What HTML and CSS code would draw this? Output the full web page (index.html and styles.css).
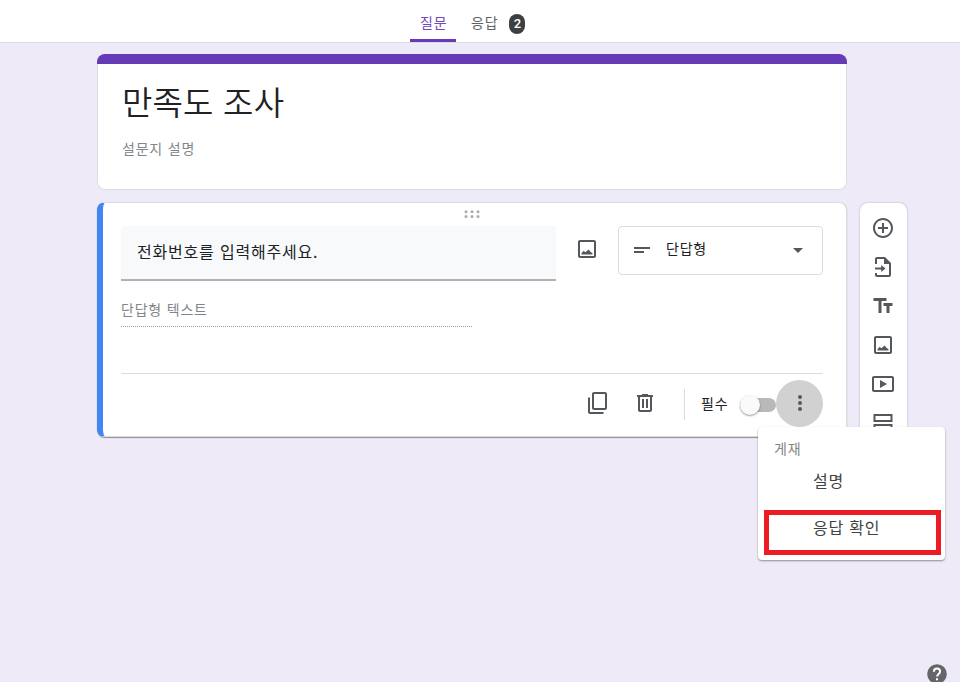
FILE: index.html
```html
<!DOCTYPE html>
<html lang="ko">
<head>
<meta charset="utf-8">
<title>만족도 조사</title>
<link rel="stylesheet" href="styles.css">
</head>
<body>
<header class="tabs">
  <div class="tab active">질문</div>
  <div class="tab">응답 <span class="count">2</span></div>
</header>
<main class="form">
  <section class="card intro">
    <h1>만족도 조사</h1>
    <p>설문지 설명</p>
  </section>
  <div class="row">
    <section class="card question">
      <svg class="grip" viewBox="0 0 16 8"><circle cx="2" cy="1.7" r="1.5"/><circle cx="8" cy="1.7" r="1.5"/><circle cx="14" cy="1.7" r="1.5"/><circle cx="2" cy="6.5" r="1.5"/><circle cx="8" cy="6.5" r="1.5"/><circle cx="14" cy="6.5" r="1.5"/></svg>
      <div class="edit">
        <div class="input">전화번호를 입력해주세요.</div>
        <svg class="icon photo" viewBox="0 0 24 24"><path d="M19 5v14H5V5h14m0-2H5c-1.100 0-2 .9-2 2v14c0 1.100.9 2 2 2h14c1.100 0 2-.9 2-2V5c0-1.100-.9-2-2-2z"/><path d="M6.500 17.500v-1.300l2.200-2.400 1.700 1.500 3.200-2.700 1.900 2.200 2 1.400v1.300z"/></svg>
        <div class="select">
          <svg class="icon" viewBox="0 0 24 24"><path d="M4 9h16v2H4zM4 13h10v2H4z"/></svg>
          <span>단답형</span>
          <svg class="icon" viewBox="0 0 24 24"><path d="M7 10l5 5 5-5z"/></svg>
        </div>
      </div>
      <div class="answer">단답형 텍스트</div>
      <div class="actions">
        <svg class="icon copy" viewBox="0 0 24 24"><path d="M19 1H8c-1.100 0-2 .9-2 2v14c0 1.100.9 2 2 2h11c1.100 0 2-.9 2-2V3c0-1.100-.9-2-2-2zm0 16H8V3h11v14zM4 6.500H2V21c0 1.100.9 2 2 2h13.500v-2H4z"/></svg>
        <svg class="icon trash" viewBox="0 0 24 24"><path d="M15 4V3H9v1H4v2h1v13c0 1.100.9 2 2 2h10c1.100 0 2-.9 2-2V6h1V4h-5zm2 15H7V6h10v13zM9 8h2v9H9zM13 8h2v9h-2z"/></svg>
        <div class="required">필수</div>
        <div class="switch"><i></i></div>
        <div class="more">
          <svg class="icon" viewBox="0 0 24 24"><circle cx="12" cy="6" r="2"/><circle cx="12" cy="12" r="2"/><circle cx="12" cy="18" r="2"/></svg>
        </div>
      </div>
    </section>
    <aside class="tools">
      <svg class="icon" viewBox="0 0 24 24"><path d="M13 7h-2v4H7v2h4v4h2v-4h4v-2h-4V7zm-1-5C6.480 2 2 6.480 2 12s4.480 10 10 10 10-4.480 10-10S17.520 2 12 2zm0 18c-4.410 0-8-3.590-8-8s3.590-8 8-8 8 3.590 8 8-3.590 8-8 8z"/></svg>
      <svg class="icon" viewBox="0 0 24 24"><path d="M14 2H6c-1.100 0-2 .9-2 2v5h2V4h7v5h5v11H6v-2H4v2c0 1.100.9 2 2 2h12c1.100 0 2-.9 2-2V8z"/><path d="M4 12.500h6.200V10l4.300 3.500-4.300 3.500v-2.500H4z"/></svg>
      <svg class="icon" viewBox="0 0 24 24"><path d="M2.500 4v3h5v12h3V7h5V4h-13zm19 5h-9v3h3v7h3v-7h3V9z"/></svg>
      <svg class="icon" viewBox="0 0 24 24"><path d="M19 5v14H5V5h14m0-2H5c-1.100 0-2 .9-2 2v14c0 1.100.9 2 2 2h14c1.100 0 2-.9 2-2V5c0-1.100-.9-2-2-2z"/><path d="M6.500 17.500v-1.300l2.200-2.400 1.700 1.500 3.200-2.700 1.900 2.200 2 1.400v1.300z"/></svg>
      <svg class="icon" viewBox="0 0 24 24"><path d="M9 8v8l7-4zM21 4H3c-1.100 0-2 .9-2 2v12c0 1.100.9 2 2 2h18c1.100 0 2-.9 2-2V6c0-1.100-.9-2-2-2zm0 14H3V6h18v12z"/></svg>
      <svg class="icon" viewBox="0 0 24 24"><path d="M2.500 3v8h19V3h-19zm17 6h-15V5h15v4zM2.500 13v8h19v-8h-19zm17 6h-15v-4h15v4z"/></svg>
    </aside>
  </div>
</main>
<div class="menu">
  <div class="heading">게재</div>
  <div class="item">설명</div>
  <div class="item">응답 확인</div>
  <div class="highlight"></div>
</div>
<svg class="help" viewBox="0 0 20 20"><circle cx="10" cy="10" r="9.800"/><path d="M6.900 7.700C6.900 5.700 8.200 4.500 10 4.500s3.100 1.200 3.100 2.900c0 2.400-3 2.600-3 5.100M10 14.300v2"/></svg>
</body>
</html>
```
FILE: styles.css
```css
* { box-sizing: border-box; }
body {
  margin: 0;
  height: 682px;
  overflow: hidden;
  position: relative;
  background: #eeeaf8;
  color: #202124;
  font: 14px/20px "Noto Sans CJK KR", sans-serif;
  letter-spacing: .8px;
}
.icon { display: block; width: 24px; height: 24px; flex: none; fill: #54585d; }
.tabs {
  display: flex;
  height: 43px;
  padding-left: 410px;
  background: #fff;
  border-bottom: 1px solid #dcdbe2;
}
.tab {
  display: flex;
  height: 42px;
  padding: 2px 9px 0 10px;
  align-items: center;
  color: #5f6368;
  white-space: nowrap;
}
.tab + .tab { padding-left: 15px; }
.active {
  width: 46px;
  color: #7248bd;
  background: linear-gradient(#673ab7, #673ab7) bottom / 100% 3px no-repeat;
}
.count {
  width: 16px;
  height: 20px;
  margin: 4px 0 0 11px;
  border-radius: 8px;
  background: #3c4043;
  color: #fff;
  font: 500 13px/20px Roboto, sans-serif;
  letter-spacing: 0;
  text-align: center;
}
.form { padding: 11px 0 0 97px; }
.card {
  width: 750px;
  background: #fff;
  border: 1px solid #dadce0;
  border-radius: 8px;
}
.intro {
  height: 136px;
  padding: 0 25px;
  overflow: hidden;
  border: 0;
  box-shadow: inset 0 0 0 1px #dadce0;
}
.intro::before {
  content: "";
  display: block;
  height: 10px;
  margin: 0 -25px 13px;
  background: #673ab7;
}
h1 {
  margin: 0;
  font-size: 33px;
  line-height: 48px;
  font-weight: 350;
  letter-spacing: .2px;
}
.intro p { margin: 13px 0 0; color: #80868b; }
.row { display: flex; gap: 13px; margin-top: 12px; }
.question {
  height: 235px;
  padding: 7px 23px 0 18px;
  border-left: 6px solid #4285f4;
  box-shadow: 0 1px 1px rgba(0,0,0,.4);
}
.grip { display: block; width: 16px; height: 8px; margin: 0 0 8px 343px; fill: #acacac; }
.edit { display: flex; height: 55px; align-items: flex-start; }
.input {
  width: 435px;
  height: 55px;
  padding: 13px 16px;
  background: #f8f9fb;
  border-bottom: 2px solid #b0b1b4;
  border-radius: 4px 4px 0 0;
  font-size: 16px;
  line-height: 24px;
}
.photo { margin: 11px 19px 0; }
.select {
  display: flex;
  width: 205px;
  height: 49px;
  align-items: center;
  border: 1px solid #dadce0;
  border-radius: 4px;
  padding: 0 12px 2px 11px;
}
.select .icon:last-child { margin: 1px 0 0 auto; }
.select span { margin: -4px 0 0 12px; }
.answer {
  width: 351px;
  height: 46px;
  padding-top: 18px;
  color: #80868b;
  border-bottom: 1px dotted #9b9da0;
}
.actions {
  display: flex;
  align-items: center;
  height: 59px;
  margin-top: 46px;
  padding-left: 465px;
  border-top: 1px solid #dadce0;
}
.trash { margin-left: 23px; }
.required {
  flex: none;
  width: 44px;
  height: 31px;
  margin: 2px 0 0 27px;
  padding-left: 16px;
  border-left: 1px solid #dadce0;
  line-height: 28px;
  white-space: nowrap;
}
.switch { flex: none; width: 36px; height: 14px; margin: 4px 0 0 12px; border-radius: 7px; background: #b9b9b9; }
.switch i {
  display: block;
  width: 20px;
  height: 20px;
  margin-top: -3px;
  border-radius: 50%;
  background: #fafafa;
  box-shadow: 0 1px 2px rgba(0,0,0,.4);
}
.more {
  display: grid;
  place-items: center;
  flex: none;
  width: 47px;
  height: 47px;
  border-radius: 50%;
  background: #d1d1d1;
}
.tools {
  display: flex;
  flex-direction: column;
  align-items: center;
  gap: 15px;
  width: 47px;
  height: 244px;
  margin-top: 1px;
  padding: 13px 1px 0 0;
  background: #fff;
  border-radius: 8px;
  box-shadow: 0 0 2px rgba(0,0,0,.3);
}
.menu {
  position: absolute;
  left: 758px;
  top: 427px;
  width: 187px;
  height: 133px;
  padding: 11px 16px;
  border-radius: 4px;
  background: #fff;
  box-shadow: 0 1px 2px rgba(0,0,0,.4);
}
.heading { color: #858585; }
.item {
  height: 47px;
  padding-left: 39px;
  color: #424242;
  font-size: 16px;
  line-height: 44px;
}
.highlight {
  position: absolute;
  left: 6px;
  top: 83px;
  width: 177px;
  height: 45px;
  border: 5px solid #ed1c24;
}
.help {
  position: absolute;
  left: 927px;
  top: 664px;
  width: 20px;
  height: 20px;
  fill: #666569;
}
.help path { fill: none; stroke: #fff; stroke-width: 2; }
```
